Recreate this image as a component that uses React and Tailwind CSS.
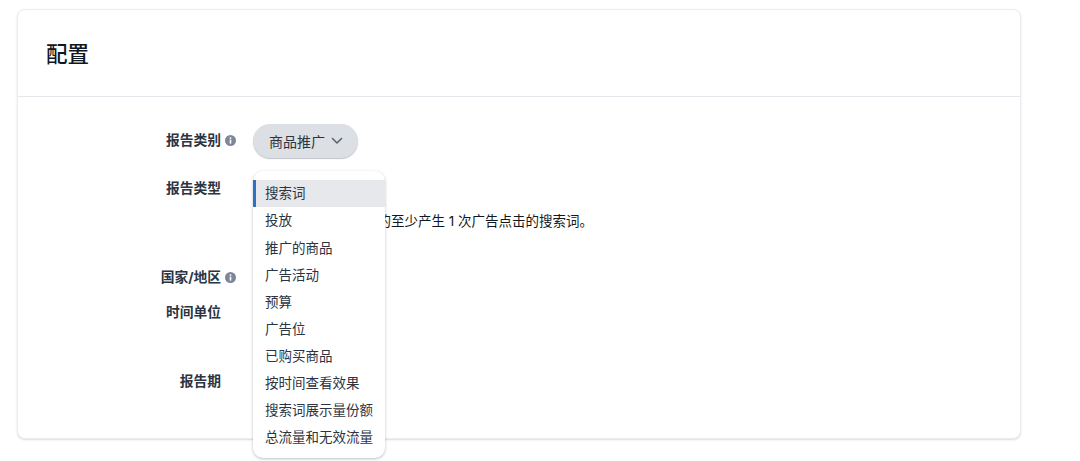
import React from "react";

const font = { fontFamily: '"Inter","Liberation Sans","Noto Sans CJK SC",sans-serif' };

function Info() {
  return (
    <svg width="11" height="11" viewBox="0 0 11 11" className="shrink-0">
      <circle cx="5.5" cy="5.5" r="5.5" fill="#7d8798" />
      <rect x="4.7" y="4.6" width="1.6" height="4" fill="#fff" />
      <rect x="4.7" y="2.3" width="1.6" height="1.5" fill="#fff" />
    </svg>
  );
}

function Row({ label, info, className, children }) {
  return (
    <div className={`flex ${className}`}>
      <div className="w-[218px] shrink-0 flex items-center justify-end h-[20px]">
        <span className="text-[13.75px] leading-[20px] font-bold text-[#2b3442] whitespace-nowrap">{label}</span>
        <span className="w-[15px] flex justify-end">{info ? <Info /> : null}</span>
      </div>
      <div className="ml-[17px] flex-1">{children}</div>
    </div>
  );
}

const items = ["投放", "推广的商品", "广告活动", "预算", "广告位", "已购买商品", "按时间查看效果", "搜索词展示量份额", "总流量和无效流量"];

export default function App() {
  return (
    <div className="w-[1080px] h-[461px] bg-white overflow-hidden pt-[9px] pl-[17px]" style={font}>
      <div className="w-[1004px] h-[430px] bg-white rounded-[8px] border border-[#eaecef] shadow-[0_1px_2px_rgba(30,40,60,0.16)]">
        <div className="h-[87px] border-b border-[#e4e7eb] pl-[28px] pt-[28px]">
          <h1 className="text-[21.5px] leading-[32px] font-medium text-[#0f1720]">配置</h1>
        </div>
        <div className="relative pt-[33px]">
          <Row label="报告类别" info className="h-[48px]">
            <div className="-mt-[6px] w-[105px] h-[34px] rounded-full bg-[#dcdfe4] shadow-[0_1px_1px_rgba(30,40,60,0.28)] flex items-center pl-[16px] gap-[6px]">
              <span className="text-[14px] text-[#2b3442] whitespace-nowrap">商品推广</span>
              <svg width="12" height="8" viewBox="0 0 12 8" fill="none" stroke="#5a6472" strokeWidth="1.6" strokeLinecap="round" strokeLinejoin="round">
                <path d="M1.500 1.500 6 6l4.500-4.500" />
              </svg>
            </div>
          </Row>
          <Row label="报告类型" className="h-[89px]">
            <p className="mt-[33px] text-[13.5px] leading-[20px] font-normal text-[#0f1720] whitespace-nowrap pl-[19px]">显示过去 90 天内的至少产生 1 次广告点击的搜索词。</p>
          </Row>
          <Row label="国家/地区" info className="h-[35px]" />
          <Row label="时间单位" className="h-[69px]" />
          <Row label="报告期" className="h-[40px]" />

          <div className="absolute left-[235px] top-[74px] w-[132px] h-[287px] bg-white rounded-[10px] shadow-[0_1px_3px_rgba(30,40,60,0.3)] pt-[9px]">
            <div className="h-[27px] bg-[#e6e8ec] border-l-[3px] border-[#2f6fc4] pl-[9px] flex items-center text-[13.5px] text-[#2b3442] whitespace-nowrap">搜索词</div>
            {items.map((t) => (
              <div key={t} className="h-[27.1px] pl-[12px] flex items-center text-[13.5px] text-[#2b3442] whitespace-nowrap">{t}</div>
            ))}
          </div>
        </div>
      </div>
    </div>
  );
}
